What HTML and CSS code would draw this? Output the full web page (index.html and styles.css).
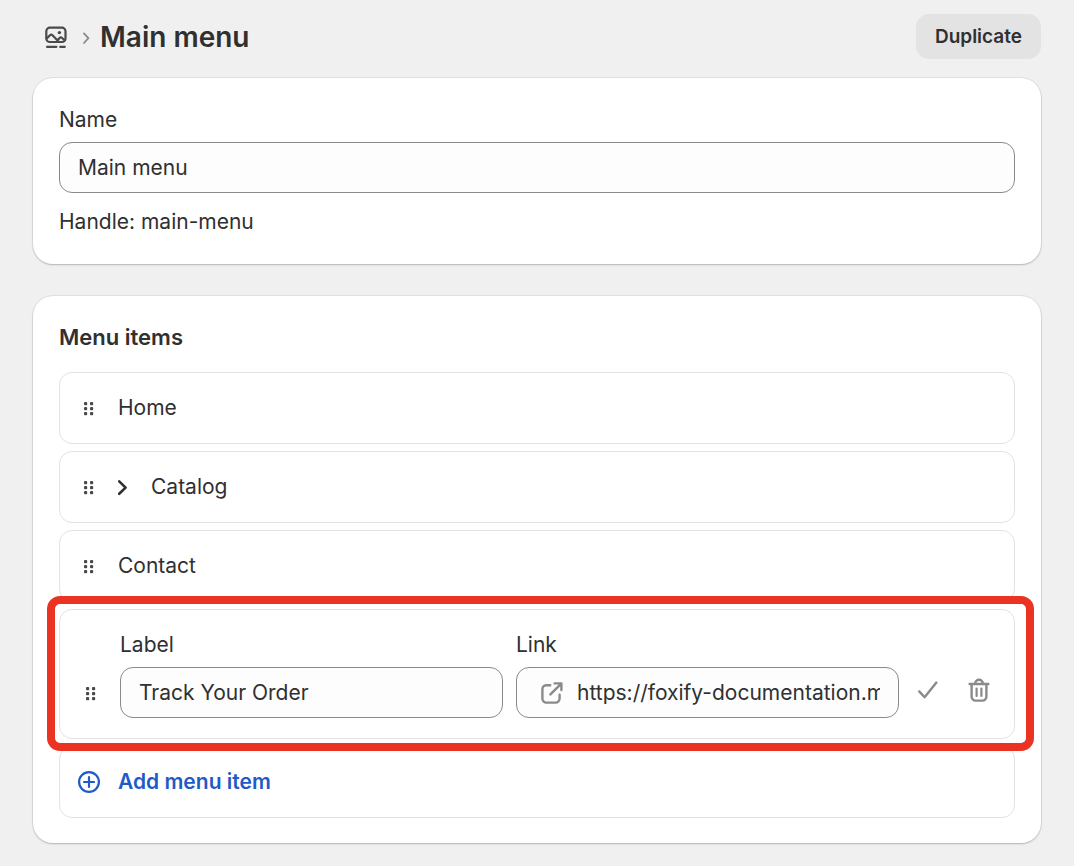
FILE: index.html
```html
<!DOCTYPE html>
<html lang="en">
<head>
    <meta charset="UTF-8">
    <meta name="viewport" content="width=device-width, initial-scale=1.0">
    <title>Main menu</title>
    <link rel="stylesheet" href="styles.css">
</head>
<body>
    <svg class="sprite" aria-hidden="true">
        <symbol id="drag" viewBox="0 0 22 22">
            <g fill="#4a4a4a">
                <rect x="6" y="5" width="3.2" height="3.2" rx="1"/>
                <rect x="12" y="5" width="3.2" height="3.2" rx="1"/>
                <rect x="6" y="10" width="3.2" height="3.2" rx="1"/>
                <rect x="12" y="10" width="3.2" height="3.2" rx="1"/>
                <rect x="6" y="15" width="3.2" height="3.2" rx="1"/>
                <rect x="12" y="15" width="3.2" height="3.2" rx="1"/>
            </g>
        </symbol>
    </svg>

    <main class="page">
        <header class="page-header">
            <a class="back-link" href="#" aria-label="Menus">
                <svg width="22" height="22" viewBox="0 0 22 22" fill="none" stroke="#4a4a4a" stroke-width="2.2" stroke-linecap="round" stroke-linejoin="round">
                    <rect x="1.3" y="1.6" width="19.2" height="14.4" rx="3.6"/>
                    <path d="M1.8 12.4l3.2-3.2c.8-.8 1.7-.8 2.5 0l6 6.2M12.8 14l1.8-2c.8-.8 1.7-.8 2.5 0l2.4 2.2"/>
                    <circle cx="14.4" cy="6.6" r="1.7" fill="#4a4a4a" stroke="none"/>
                    <path d="M2 20.8h9.4M15.2 20.8h4.6"/>
                </svg>
            </a>
            <svg class="crumb" width="8" height="14" viewBox="0 0 8 14" fill="none" stroke="#8a8a8a" stroke-width="1.8" stroke-linecap="round" stroke-linejoin="round">
                <path d="M2 3.4l4.4 4.8L2 13"/>
            </svg>
            <h1>Main menu</h1>
            <button type="button" class="btn">Duplicate</button>
        </header>

        <section class="card">
            <label for="menuName">Name</label>
            <input class="input" type="text" id="menuName" value="Main menu">
            <p class="handle-text">Handle: main-menu</p>
        </section>

        <section class="card">
            <h2>Menu items</h2>
            <ul class="menu-list">
                <li class="menu-item">
                    <button type="button" class="icon-btn" aria-label="Move Home"><svg width="22" height="22"><use href="#drag"/></svg></button>
                    <span>Home</span>
                </li>
                <li class="menu-item">
                    <button type="button" class="icon-btn" aria-label="Move Catalog"><svg width="22" height="22"><use href="#drag"/></svg></button>
                    <button type="button" class="icon-btn" aria-label="Expand Catalog">
                        <svg width="15" height="18" viewBox="0 0 15 18" fill="none" stroke="#303030" stroke-width="2.6" stroke-linecap="round" stroke-linejoin="round">
                            <path d="M1.2 3.4l6.4 6.2-6.4 6.2"/>
                        </svg>
                    </button>
                    <span>Catalog</span>
                </li>
                <li class="menu-item">
                    <button type="button" class="icon-btn" aria-label="Move Contact"><svg width="22" height="22"><use href="#drag"/></svg></button>
                    <span>Contact</span>
                </li>
                <li class="menu-item editing">
                    <button type="button" class="icon-btn tall" aria-label="Move Track Your Order"><svg width="22" height="22"><use href="#drag"/></svg></button>
                    <div class="fields">
                        <div class="field">
                            <label for="itemLabel">Label</label>
                            <input class="input" type="text" id="itemLabel" value="Track Your Order">
                        </div>
                        <div class="field">
                            <label for="itemLink">Link</label>
                            <div class="input link-input">
                                <svg width="22" height="22" viewBox="0 0 22 22" fill="none" stroke="#8a8a8a" stroke-width="2.4" stroke-linecap="round" stroke-linejoin="round">
                                    <path d="M9.2 3.2H5.2A4 4 0 0 0 1.4 7.2v9.4a4 4 0 0 0 4 4h9.2a4 4 0 0 0 4-4v-3.8"/>
                                    <path d="M13.6 1.4h6.8V8M20 1.8L9.4 12.4"/>
                                </svg>
                                <input type="text" id="itemLink" value="https://foxify-documentation.myshopify.com">
                            </div>
                        </div>
                    </div>
                    <div class="actions">
                        <button type="button" class="icon-btn" aria-label="Apply">
                            <svg width="22" height="22" viewBox="0 0 22 22" fill="none" stroke="#8a8a8a" stroke-width="2.4" stroke-linecap="round" stroke-linejoin="round">
                                <path d="M2.2 12.4l5.4 5.8L19.4 3.6"/>
                            </svg>
                        </button>
                        <button type="button" class="icon-btn" aria-label="Delete">
                            <svg width="22" height="24" viewBox="0 0 22 24" fill="none" stroke="#8a8a8a" stroke-width="2.4" stroke-linecap="round" stroke-linejoin="round">
                                <path d="M1.6 6h18.8M7.2 5.6a3.8 3.8 0 0 1 7.6 0"/>
                                <path d="M3.6 6.4v12.2a4 4 0 0 0 4 4h6.8a4 4 0 0 0 4-4V6.4"/>
                                <path d="M8.6 10.6v7.4M13.4 10.6v7.4" stroke-width="2.2"/>
                            </svg>
                        </button>
                    </div>
                </li>
                <li>
                    <button type="button" class="menu-item add-item">
                        <svg width="22" height="22" viewBox="0 0 22 22" fill="none" stroke="#1f5ac8" stroke-width="2.2" stroke-linecap="round">
                            <circle cx="11" cy="11" r="9.9"/>
                            <path d="M11 6v10M6 11h10"/>
                        </svg>
                        <span>Add menu item</span>
                    </button>
                </li>
            </ul>
        </section>
    </main>
</body>
</html>
```
FILE: styles.css
```css
* {
    margin: 0;
    padding: 0;
    box-sizing: border-box;
}

body {
    font-family: Inter, "Liberation Sans", sans-serif;
    font-size: 21px;
    line-height: 32px;
    color: #303030;
    background: #f0f0f0;
}

button,
input {
    font: inherit;
    color: inherit;
}

button {
    cursor: pointer;
}

svg {
    display: block;
    flex-shrink: 0;
}

.sprite {
    position: absolute;
    width: 0;
    height: 0;
}

.page {
    padding: 14px 33px 22px;
}

.page-header {
    display: flex;
    align-items: center;
    margin-bottom: 19px;
    padding-left: 12px;
}

.crumb {
    margin: 0 10px 0 15px;
}

h1 {
    flex: 1;
    font-size: 28px;
    font-weight: 600;
}

.btn {
    height: 45px;
    padding: 0 19px;
    border: none;
    border-radius: 13px;
    background: #e3e3e3;
    font-size: 19px;
    font-weight: 600;
}

.card {
    padding: 26px;
    margin-bottom: 32px;
    background: white;
    border-radius: 20px;
    box-shadow: 0 0 0 1px rgba(0, 0, 0, 0.06), 0 1px 2px rgba(0, 0, 0, 0.2);
}

.card:last-child {
    margin-bottom: 0;
    padding-bottom: 25px;
}

label {
    display: block;
    margin-bottom: 6px;
}

.input {
    display: block;
    width: 100%;
    height: 51px;
    padding: 0 18px;
    border: 1px solid #8a8a8a;
    border-radius: 13px;
    background: #fdfdfd;
}

.handle-text {
    margin-top: 13px;
}

h2 {
    margin-bottom: 20px;
    font-size: 22px;
    font-weight: 600;
    line-height: 30px;
}

.menu-list {
    display: flex;
    flex-direction: column;
    gap: 7px;
    list-style: none;
}

.menu-item {
    display: flex;
    align-items: center;
    gap: 18px;
    width: 100%;
    min-height: 72px;
    padding: 0 18px;
    border: 1px solid #e3e3e3;
    border-radius: 13px;
    background: white;
}

.icon-btn {
    display: flex;
    align-items: center;
    border: none;
    background: none;
}

.editing {
    position: relative;
    align-items: flex-end;
    padding: 19px 24px 20px 20px;
}

/* red highlight around the item being edited */
.editing::after {
    content: "";
    position: absolute;
    inset: -14px -20px -13px -13px;
    border: 8px solid #ea3323;
    border-radius: 13px;
    pointer-events: none;
}

.tall {
    height: 51px;
}

.fields {
    display: flex;
    flex: 1;
    gap: 13px;
}

.field {
    flex: 1;
    min-width: 0;
}

.link-input {
    display: flex;
    align-items: center;
    gap: 14px;
    padding-left: 24px;
}

.link-input input {
    flex: 1;
    min-width: 0;
    border: none;
    outline: none;
    background: none;
}

.actions {
    display: flex;
    align-items: center;
    gap: 29px;
    height: 51px;
    padding-bottom: 6px;
}

.add-item {
    color: #1f5ac8;
    font-weight: 600;
    text-align: left;
}
```
